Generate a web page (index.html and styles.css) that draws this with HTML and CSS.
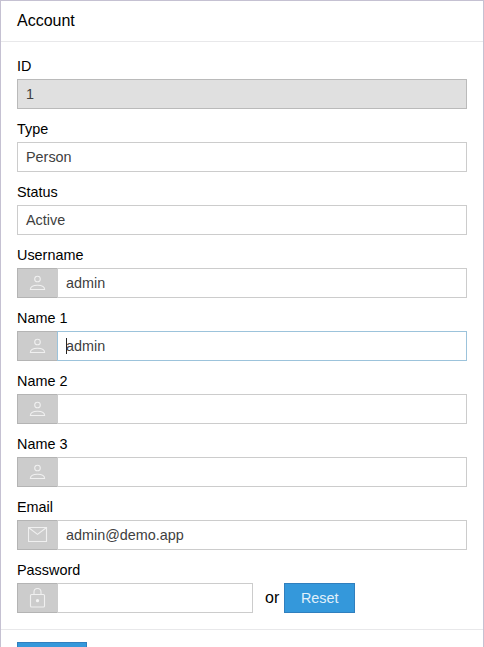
FILE: index.html
```
<!DOCTYPE html>
<html lang="en">
<head>
<meta charset="utf-8">
<title>Account</title>
<link rel="stylesheet" href="styles.css">
</head>
<body>
<svg class="defs" aria-hidden="true">
  <symbol id="person" viewBox="0.5 0 20 20"><circle cx="10" cy="6" r="2.8"/><path d="M2.9 16.5c0-3 3-4.2 7.1-4.2s7.1 1.2 7.1 4.2z"/></symbol>
  <symbol id="mail" viewBox="0.5 0 20 20"><path d="M1 2.5h18v14H1zM1.3 2.8l8.7 6.6 8.7-6.6"/></symbol>
  <symbol id="lock" viewBox="0.5 0 20 20"><rect x="3" y="6.5" width="14" height="12.5" rx="1"/><path d="M6.5 6.5V4a3.5 3.5 0 0 1 7 0v2.5"/><circle class="dot" cx="10" cy="12.7" r="1.6"/></symbol>
</svg>
<div class="panel">
  <header class="head">Account</header>
  <main class="form">
    <div class="field"><div class="label">ID</div><div class="row"><div class="input disabled">1</div></div></div>
    <div class="field"><div class="label">Type</div><div class="row"><div class="input">Person</div></div></div>
    <div class="field"><div class="label">Status</div><div class="row"><div class="input">Active</div></div></div>
    <div class="field"><div class="label">Username</div><div class="row"><div class="addon"><svg class="icon"><use href="#person"/></svg></div><div class="input">admin</div></div></div>
    <div class="field"><div class="label">Name 1</div><div class="row"><div class="addon"><svg class="icon"><use href="#person"/></svg></div><div class="input focused"><span class="caret"></span>admin</div></div></div>
    <div class="field"><div class="label">Name 2</div><div class="row"><div class="addon"><svg class="icon"><use href="#person"/></svg></div><div class="input"></div></div></div>
    <div class="field"><div class="label">Name 3</div><div class="row"><div class="addon"><svg class="icon"><use href="#person"/></svg></div><div class="input"></div></div></div>
    <div class="field"><div class="label">Email</div><div class="row"><div class="addon"><svg class="icon"><use href="#mail"/></svg></div><div class="input">admin@demo.app</div></div></div>
    <div class="field"><div class="label">Password</div><div class="row"><div class="addon"><svg class="icon"><use href="#lock"/></svg></div><div class="input short"></div><span class="or">or</span><div class="button">Reset</div></div></div>
  </main>
  <footer class="foot"><div class="button save"></div></footer>
</div>
</body>
</html>
```
FILE: styles.css
```
* { box-sizing: border-box; }
body {
  margin: 0;
  background: #fff;
  color: #000;
  font: 14.4px "Liberation Sans", Arial, sans-serif;
}
.defs { display: none; }
.panel {
  height: 647px;
  overflow: hidden;
  border: 1px solid #c5c1d2;
  border-bottom: 0;
}
.head {
  height: 41px;
  padding: 0 16px;
  border-bottom: 1px solid #e8e8ea;
  font-size: 16px;
  line-height: 39px;
}
.form { padding: 16px 16px 0; height: 587px; }
.field { height: 63px; }
.label { height: 21px; line-height: 17px; }
.row { display: flex; height: 30px; }
.input {
  flex: 1;
  display: flex;
  align-items: center;
  height: 30px;
  padding: 0 8px;
  border: 1px solid #ccc;
  background: #fff;
  color: #404040;
}
.disabled { background: #e0e0e0; border-color: #bababa; }
.focused { border-color: #9cc3db; }
.caret { width: 1px; height: 16px; margin-right: -1px; background: #222; }
.addon {
  display: flex;
  align-items: center;
  justify-content: center;
  width: 40px;
  background: #ccc;
  border: 1px solid #b4b4b4;
  border-right: 0;
}
.icon {
  width: 20px;
  height: 20px;
  fill: none;
  stroke: #f0f0f0;
  stroke-width: 1.1;
}
.dot { fill: #f4f4f4; stroke: none; }
.short { flex: 0 0 196px; }
.or { margin: 0 5px 0 12px; font-size: 16px; line-height: 29px; }
.button {
  width: 71px;
  height: 30px;
  border: 1px solid #307fbe;
  background: #3498db;
  color: #e1f0fa;
  line-height: 28px;
  text-align: center;
}
.foot { height: 18px; overflow: hidden; padding: 12px 16px 0; border-top: 1px solid #e8e8ea; }
.save { width: 70px; }
```
